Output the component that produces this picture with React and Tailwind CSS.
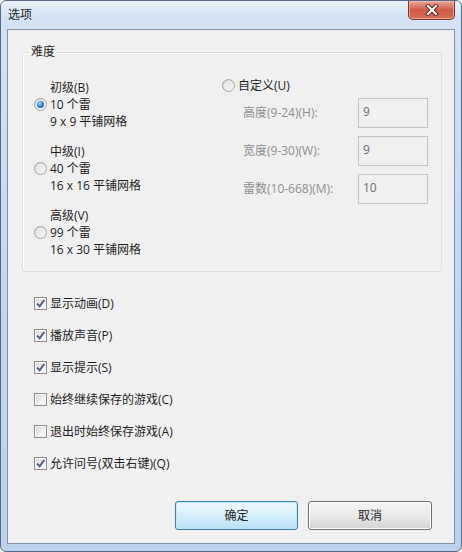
import React from 'react'

// Windows 7 style "选项" dialog (Minesweeper options)

const levels = [
  { title: '初级(B)', mines: '10 个雷', grid: '9 x 9 平铺网格', checked: true },
  { title: '中级(I)', mines: '40 个雷', grid: '16 x 16 平铺网格' },
  { title: '高级(V)', mines: '99 个雷', grid: '16 x 30 平铺网格' },
]

const customFields = [
  { label: '高度(9-24)(H):', value: '9' },
  { label: '宽度(9-30)(W):', value: '9' },
  { label: '雷数(10-668)(M):', value: '10' },
]

const options = [
  { label: '显示动画(D)', checked: true },
  { label: '播放声音(P)', checked: true },
  { label: '显示提示(S)', checked: true },
  { label: '始终继续保存的游戏(C)', checked: false },
  { label: '退出时始终保存游戏(A)', checked: false },
  { label: '允许问号(双击右键)(Q)', checked: true },
]

function Radio({ checked }) {
  return (
    <span className="w-[13px] h-[13px] rounded-full border border-[#a3a3a3] bg-gradient-to-br from-[#d6d6d6] to-[#fbfbfb] flex items-center justify-center shrink-0">
      <span className="w-[9px] h-[9px] rounded-full bg-gradient-to-br from-[#e6e6e6] to-[#f7f7f7] flex items-center justify-center">
        {checked && (
          <span className="w-[7px] h-[7px] rounded-full bg-[radial-gradient(circle_at_40%_35%,#a6dbff,#2a78c8_55%,#174f91)]" />
        )}
      </span>
    </span>
  )
}

function Checkbox({ checked }) {
  return (
    <span className="w-[13px] h-[13px] border border-[#8f8f8f] bg-[#f4f4f4] flex items-center justify-center shrink-0">
      <span className="w-[9px] h-[9px] bg-gradient-to-br from-[#dcdcdc] to-[#fbfbfb] relative">
        {checked && (
          <svg viewBox="0 0 9 9" className="absolute -left-px -top-px w-[11px] h-[11px]">
            <path d="M1.8 4.6 L3.8 6.8 L7.6 1.6" fill="none" stroke="#4a5c86" strokeWidth="1.6" />
          </svg>
        )}
      </span>
    </span>
  )
}

function CloseButton() {
  return (
    <div className="w-[47px] h-[19px] rounded-b-[5px] border border-t-0 border-[#7a3328] bg-gradient-to-b from-[#e8a898] via-[#cf5a44] to-[#d5705a] flex items-center justify-center shadow-[inset_0_0_0_1px_rgba(255,210,200,0.5)]">
      <svg viewBox="0 0 14 12" className="w-[14px] h-[12px]">
        <path d="M3 2 L11 10 M11 2 L3 10" stroke="#5a1f18" strokeWidth="4" strokeLinecap="square" />
        <path d="M3 2 L11 10 M11 2 L3 10" stroke="#ffffff" strokeWidth="2.2" strokeLinecap="square" />
      </svg>
    </div>
  )
}

export default function App() {
  return (
    <div className="w-[462px] h-[552px] flex flex-col border border-[#56698a] rounded-[6px] overflow-hidden bg-gradient-to-b from-[#d4e4f5] via-[#c3d8ef] to-[#bcd2eb] font-['Open_Sans','Noto_Sans_CJK_SC',sans-serif] text-[12px] leading-[17px] text-[#1e1e1e]">
      {/* title bar */}
      <div className="h-[28px] flex items-start justify-between pl-[7px] pr-[6px] bg-[linear-gradient(180deg,rgba(255,255,255,0.5),rgba(255,255,255,0)_60%)]">
        <span className="pt-[5px]">选项</span>
        <CloseButton />
      </div>

      {/* client area */}
      <div className="flex-1 mx-[6px] mb-[7px] border border-[#7d91ab] bg-[#f0f0f0] flex flex-col">
        {/* difficulty group */}
        <div className="relative mt-[22px] ml-[14px] mr-[12px] h-[220px] border border-[#d5dfe5] rounded-[3px] shadow-[inset_1px_1px_0_#fff]">
          <span className="absolute left-[6px] -top-[10px] px-[2px] bg-[#f0f0f0]">难度</span>

          <div className="flex pl-[11px] pt-[26px]">
            <div className="w-[188px] flex flex-col gap-[13px]">
              {levels.map((lv) => (
                <div key={lv.title} className="flex gap-[3px]">
                  <div className="w-[13px] pt-[19px]">
                    <Radio checked={lv.checked} />
                  </div>
                  <div className="flex flex-col">
                    <span>{lv.title}</span>
                    <span>{lv.mines}</span>
                    <span>{lv.grid}</span>
                  </div>
                </div>
              ))}
            </div>

            <div className="flex flex-col -mt-[2px]">
              <div className="flex items-center gap-[3px]">
                <Radio />
                <span>自定义(U)</span>
              </div>
              <div className="flex flex-col gap-[8px] mt-[4px] pl-[21px]">
                {customFields.map((f) => (
                  <div key={f.label} className="flex items-center">
                    <span className="w-[115px] text-[#8e8e8e] -mt-[2px]">{f.label}</span>
                    <div className="w-[70px] h-[30px] border border-[#c2c6ca] bg-[#f0f0f0] pl-[4px] pt-[4px] text-[#6d6d6d]">
                      {f.value}
                    </div>
                  </div>
                ))}
              </div>
            </div>
          </div>
        </div>

        {/* check options */}
        <div className="flex flex-col gap-[15px] mt-[23px] pl-[26px]">
          {options.map((o) => (
            <div key={o.label} className="flex items-center gap-[3px] h-[17px]">
              <Checkbox checked={o.checked} />
              <span>{o.label}</span>
            </div>
          ))}
        </div>

        {/* buttons */}
        <div className="mt-auto mb-[13px] mr-[22px] flex justify-end gap-[10px]">
          <button className="w-[123px] h-[29px] rounded-[3px] border border-[#3c7fb1] bg-gradient-to-b from-[#edf8fd] via-[#d6effb] to-[#b7e2f6] shadow-[inset_0_0_0_1px_#bfe6f9]">
            确定
          </button>
          <button className="w-[124px] h-[29px] rounded-[3px] border border-[#707070] bg-gradient-to-b from-[#f4f4f4] via-[#e9e9e9] to-[#d4d4d4] shadow-[inset_0_0_0_1px_#fbfbfb]">
            取消
          </button>
        </div>
      </div>
    </div>
  )
}
